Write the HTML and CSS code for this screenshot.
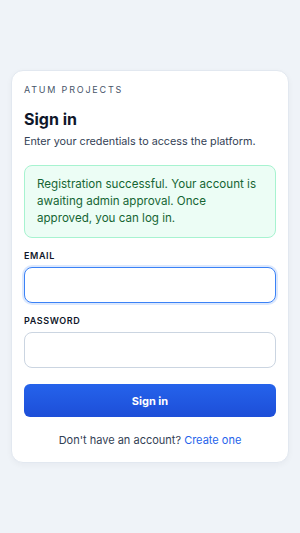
FILE: index.html
```html
<!DOCTYPE html>
<html lang="en">
<head>
    <meta charset="UTF-8">
    <meta name="viewport" content="width=device-width, initial-scale=1.0">
    <title>Sign in - Atum Projects</title>
    <link rel="stylesheet" href="styles.css">
</head>
<body>
    <div class="auth-card">
        <p class="brand">ATUM PROJECTS</p>
        <h1>Sign in</h1>
        <p class="subtitle">Enter your credentials to access the platform.</p>

        <div class="alert-success">
            Registration successful. Your account is awaiting admin approval. Once approved, you can log in.
        </div>

        <form class="login-form">
            <label for="email">EMAIL</label>
            <input type="email" id="email" class="focused">
            <label for="password">PASSWORD</label>
            <input type="password" id="password">
            <button type="submit">Sign in</button>
        </form>

        <p class="footer-text">Don't have an account? <a href="#">Create one</a></p>
    </div>
</body>
</html>
```

FILE: styles.css
```css
body {
    margin: 0;
    font-family: Inter, "Noto Sans", sans-serif;
    background-color: #eff3f8;
    display: flex;
    justify-content: center;
    align-items: center;
    height: 533px;
}

.auth-card {
    width: 252px;
    background: white;
    border: 1px solid #e2e8f0;
    border-radius: 12px;
    padding: 12px 12px 15px;
    box-shadow: 0 2px 6px rgba(15, 23, 42, 0.04);
}

.brand {
    margin: 0;
    font-size: 9px;
    letter-spacing: 1.8px;
    color: #475569;
    line-height: 14px;
}

h1 {
    margin: 12px 0 0;
    font-size: 16px;
    font-weight: 700;
    color: #0f172a;
    line-height: 20px;
}

.subtitle {
    margin: 5px 0 0;
    font-size: 10.8px;
    color: #334155;
    line-height: 16px;
}

.alert-success {
    margin-top: 15px;
    padding: 10px 16px 10px 12px;
    background: #ecfdf5;
    border: 1px solid #a7f3d0;
    border-radius: 8px;
    font-size: 11.6px;
    line-height: 17px;
    color: #166534;
}

.login-form {
    display: flex;
    flex-direction: column;
}

.login-form label {
    margin-top: 12px;
    margin-bottom: 5px;
    font-size: 9px;
    font-weight: 600;
    letter-spacing: 0.6px;
    color: #0f172a;
    line-height: 12px;
}

.login-form input {
    height: 36px;
    box-sizing: border-box;
    border: 1px solid #cbd5e1;
    border-radius: 8px;
    font-family: inherit;
    font-size: 12px;
    padding: 0 10px;
    outline: none;
}

.login-form input.focused {
    border-color: #3b82f6;
    box-shadow: 0 0 0 2px rgba(59, 130, 246, 0.18);
}

.login-form button {
    margin-top: 16px;
    height: 33px;
    border: none;
    border-radius: 6px;
    background: linear-gradient(#2563eb, #1d4ed8);
    color: white;
    font-family: inherit;
    font-size: 11px;
    font-weight: 700;
    cursor: pointer;
}

.footer-text {
    margin: 16px 0 0;
    text-align: center;
    font-size: 11px;
    color: #334155;
    line-height: 14px;
}

.footer-text a {
    color: #2563eb;
    text-decoration: none;
}
```
